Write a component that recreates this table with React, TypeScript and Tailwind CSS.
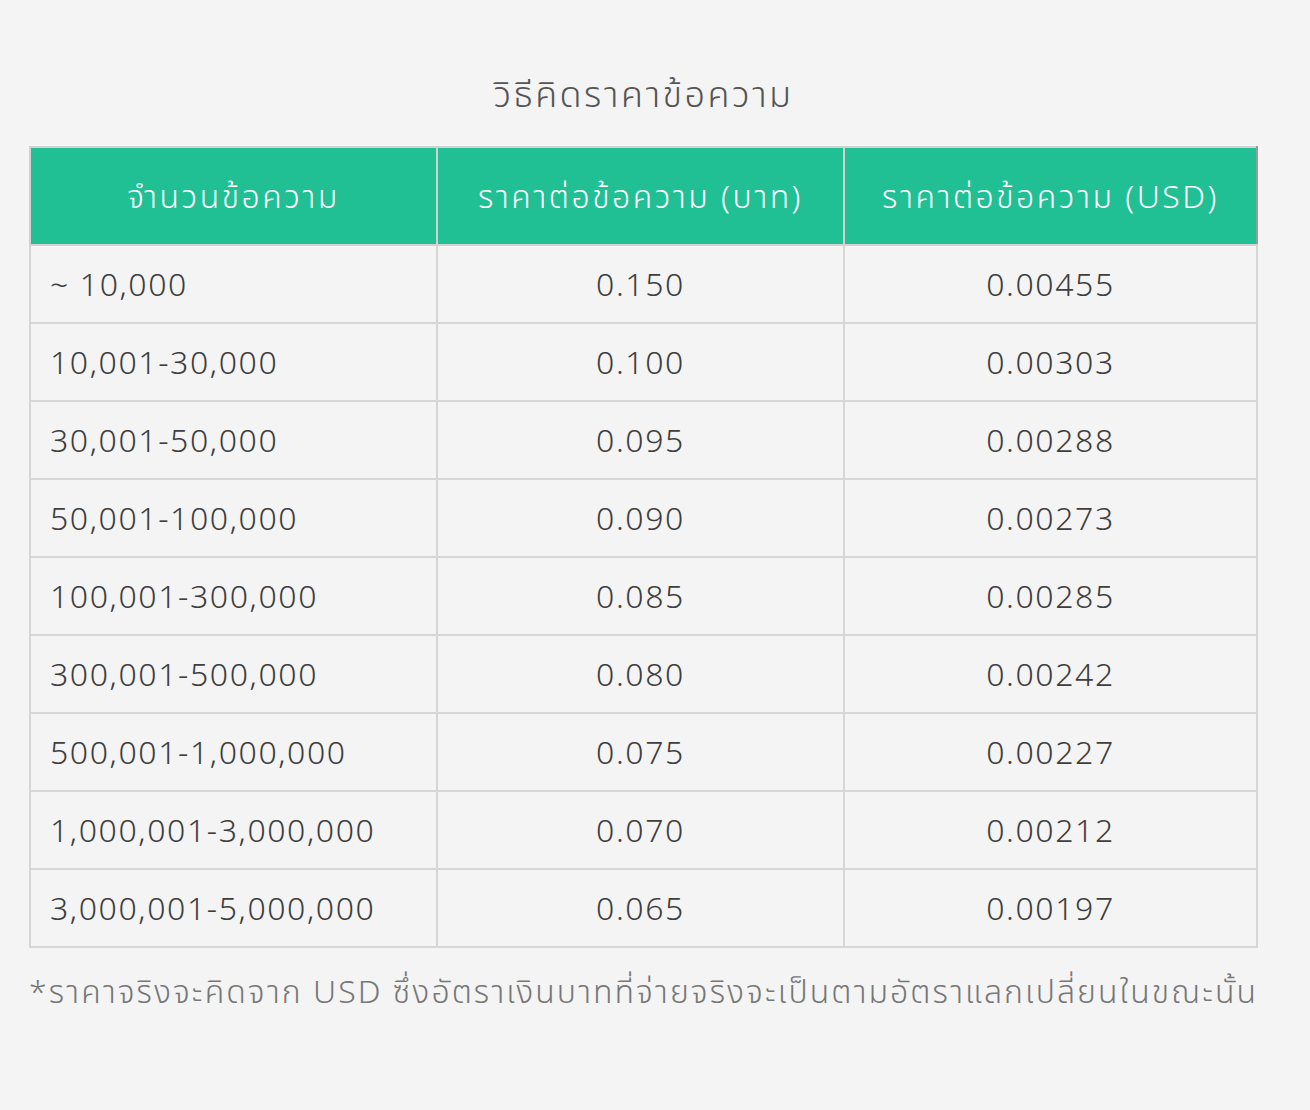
const rows = [
  ["~ 10,000", "0.150", "0.00455"],
  ["10,001-30,000", "0.100", "0.00303"],
  ["30,001-50,000", "0.095", "0.00288"],
  ["50,001-100,000", "0.090", "0.00273"],
  ["100,001-300,000", "0.085", "0.00285"],
  ["300,001-500,000", "0.080", "0.00242"],
  ["500,001-1,000,000", "0.075", "0.00227"],
  ["1,000,001-3,000,000", "0.070", "0.00212"],
  ["3,000,001-5,000,000", "0.065", "0.00197"],
];

export default function App() {
  return (
    <main className="min-h-screen bg-[#f4f4f4] pt-[69px] font-['Noto_Sans','Noto_Sans_Thai',sans-serif] font-light">
      <div className="ml-[29px] w-[1229px]">
        <h1 className="text-center text-[36px] leading-[50px] tracking-[2.5px] text-[#555]">วิธีคิดราคาข้อความ</h1>

        <table className="mt-[27px] w-full table-fixed border-collapse text-[32px] tracking-[1.6px] text-[#3e3e3e]">
          <colgroup>
            <col className="w-[407px]" />
            <col className="w-[407px]" />
            <col />
          </colgroup>
          <thead>
            <tr className="h-[98px] bg-[#20bf94] text-white tracking-[2.5px]">
              <th className="border-2 border-[#d2d2d2] font-light">จำนวนข้อความ</th>
              <th className="border-2 border-[#d2d2d2] font-light">ราคาต่อข้อความ (บาท)</th>
              <th className="border-2 border-r-[#9a9a9a] border-[#d2d2d2] font-light">ราคาต่อข้อความ (USD)</th>
            </tr>
          </thead>
          <tbody>
            {rows.map((row) => (
              <tr key={row[0]} className="h-[78px]">
                <td className="border-2 border-[#d6d6d6] px-[19px]">{row[0]}</td>
                <td className="border-2 border-[#d6d6d6] text-center">{row[1]}</td>
                <td className="border-2 border-[#d6d6d6] text-center">{row[2]}</td>
              </tr>
            ))}
          </tbody>
        </table>

        <p className="mt-[18px] whitespace-nowrap text-[32px] leading-[50px] tracking-[2.05px] text-[#777]">
          *ราคาจริงจะคิดจาก USD ซึ่งอัตราเงินบาทที่จ่ายจริงจะเป็นตามอัตราแลกเปลี่ยนในขณะนั้น
        </p>
      </div>
    </main>
  );
}
